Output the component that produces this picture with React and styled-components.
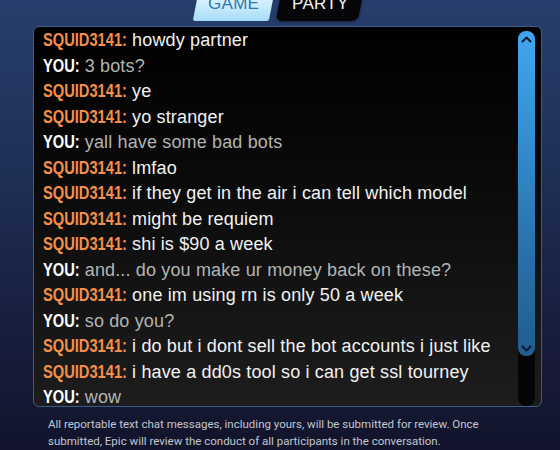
import React from "react";
import styled, { createGlobalStyle } from "styled-components";

const Global = createGlobalStyle`
  html, body { margin: 0; padding: 0; }
  body {
    width: 560px;
    height: 450px;
    overflow: hidden;
    background: linear-gradient(180deg, #273e6c 0%, #1f3158 35%, #171d3d 75%, #11142a 100%);
  }
`;

const Screen = styled.div`
  width: 560px;
  height: 450px;
  display: flex;
  flex-direction: column;
  overflow: hidden;
`;

const TabRow = styled.div`
  display: flex;
  justify-content: center;
  gap: 7px;
  margin-top: -12px;
  padding-right: 3px;
`;

const Tab = styled.div`
  width: ${(p) => p.$w}px;
  height: 33px;
  display: flex;
  align-items: center;
  justify-content: center;
  transform: skewX(-11deg);
  border-radius: ${(p) => (p.$active ? "0 0 2px 2px" : "0 0 6px 6px")};
  background: ${(p) =>
    p.$active
      ? "linear-gradient(180deg, #f2fbff 0%, #c9ecfd 55%, #a6dbf7 100%)"
      : "#060608"};
  box-shadow: ${(p) => (p.$active ? "none" : "0 1px 3px rgba(0,0,0,0.5)")};
`;

const TabLabel = styled.span`
  display: inline-block;
  transform: skewX(11deg);
  font-family: "Liberation Sans", Arial, sans-serif;
  font-size: 17px;
  letter-spacing: 0.3px;
  color: ${(p) => (p.$active ? "#2a78b6" : "#f4f4f4")};
  padding-bottom: 1px;
`;

const Panel = styled.div`
  margin: 5px 18px 0 33px;
  height: 381px;
  box-sizing: border-box;
  border: 1px solid #3b5b88;
  border-radius: 6px;
  background: linear-gradient(180deg, #000000 0%, #0a0a0a 40%, #1d1d1d 100%);
  display: grid;
  grid-template-columns: 1fr 17px;
  column-gap: 8px;
  padding: 1px 6px 0 9px;
  overflow: hidden;
`;

const Messages = styled.div`
  overflow: hidden;
  min-width: 0;
`;

const Row = styled.div`
  font-family: "Liberation Sans", Arial, sans-serif;
  font-size: 18px;
  line-height: 25.5px;
  height: 25.5px;
  white-space: nowrap;
`;

const Name = styled.span`
  display: inline-block;
  font-weight: 700;
  transform: scaleX(0.815);
  transform-origin: left center;
  margin-right: ${(p) => (p.$you ? "-8.3px" : "-19px")};
  color: ${(p) => (p.$you ? "#ffffff" : "#f3904a")};
`;

const Text = styled.span`
  letter-spacing: 0.15px;
  color: ${(p) => (p.$you ? "#b4b4b4" : "#f2f2f2")};
`;

const Scroll = styled.div`
  padding-top: 3px;
  display: flex;
  flex-direction: column;
  height: 100%;
  box-sizing: border-box;
`;

const Track = styled.div`
  flex: 1;
  border-radius: 8px;
  background: #050505;
  display: flex;
  flex-direction: column;
`;

const Thumb = styled.div`
  height: 325px;
  border-radius: 8px;
  background: linear-gradient(180deg, #41a6ee 0%, #3590d4 30%, #2a73ae 65%, #215c8f 100%);
  display: flex;
  flex-direction: column;
  justify-content: space-between;
  align-items: center;
  padding: 5px 0 4px;
  box-sizing: border-box;
`;

const Chevron = ({ down }) => (
  <svg width="11" height="7" viewBox="0 0 11 7">
    <path
      d={down ? "M1.5 1.5 L5.5 5.5 L9.5 1.5" : "M1.5 5.5 L5.5 1.5 L9.5 5.5"}
      fill="none"
      stroke="#0c1a30"
      strokeWidth="2"
      strokeLinecap="round"
      strokeLinejoin="round"
    />
  </svg>
);

const Notice = styled.p`
  margin: 9px 0 0 48px;
  width: 450px;
  font-family: Roboto, "Noto Sans", sans-serif;
  font-size: 11.5px;
  line-height: 17px;
  color: #c3c7d2;
`;

const messages = [
  ["SQUID3141", "howdy partner"],
  ["YOU", "3 bots?"],
  ["SQUID3141", "ye"],
  ["SQUID3141", "yo stranger"],
  ["YOU", "yall have some bad bots"],
  ["SQUID3141", "lmfao"],
  ["SQUID3141", "if they get in the air i can tell which model"],
  ["SQUID3141", "might be requiem"],
  ["SQUID3141", "shi is $90 a week"],
  ["YOU", "and... do you make ur money back on these?"],
  ["SQUID3141", "one im using rn is only 50 a week"],
  ["YOU", "so do you?"],
  ["SQUID3141", "i do but i dont sell the bot accounts i just like"],
  ["SQUID3141", "i have a dd0s tool so i can get ssl tourney"],
  ["YOU", "wow"],
];

export default function App() {
  return (
    <>
      <Global />
      <Screen>
        <TabRow>
          <Tab $active $w={76}>
            <TabLabel $active>GAME</TabLabel>
          </Tab>
          <Tab $w={82}>
            <TabLabel>PARTY</TabLabel>
          </Tab>
        </TabRow>
        <Panel>
          <Messages>
            {messages.map(([who, msg], i) => {
              const you = who === "YOU";
              return (
                <Row key={i}>
                  <Name $you={you}>{who}:</Name> <Text $you={you}>{msg}</Text>
                </Row>
              );
            })}
          </Messages>
          <Scroll>
            <Track>
              <Thumb>
                <Chevron />
                <Chevron down />
              </Thumb>
            </Track>
          </Scroll>
        </Panel>
        <Notice>
          All reportable text chat messages, including yours, will be submitted for review. Once
          submitted, Epic will review the conduct of all participants in the conversation.
        </Notice>
      </Screen>
    </>
  );
}
